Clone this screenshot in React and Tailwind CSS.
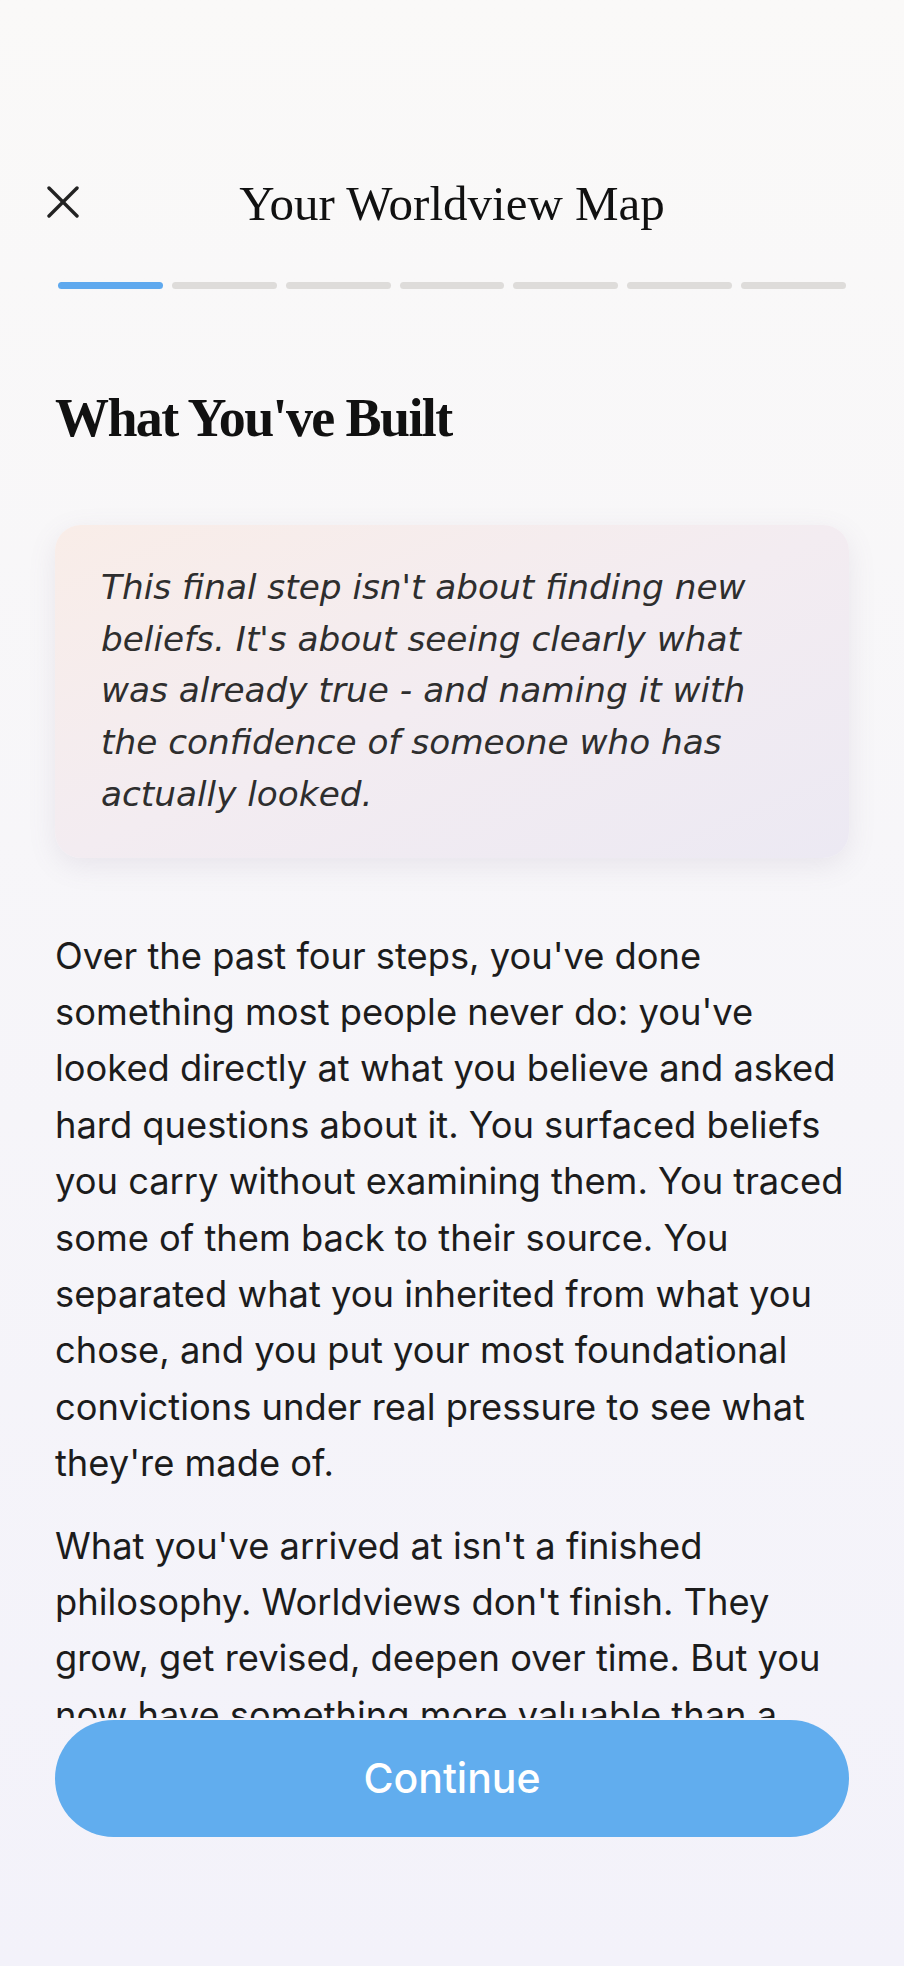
import { useState } from 'react'

const steps = [0, 1, 2, 3, 4, 5, 6]

const paragraphs = [
  "Over the past four steps, you've done something most people never do: you've looked directly at what you believe and asked hard questions about it. You surfaced beliefs you carry without examining them. You traced some of them back to their source. You separated what you inherited from what you chose, and you put your most foundational convictions under real pressure to see what they're made of.",
  "What you've arrived at isn't a finished philosophy. Worldviews don't finish. They grow, get revised, deepen over time. But you now have something more valuable than a finished answer: a map you drew yourself, with your own hands, from what you actually found.",
]

function CloseIcon() {
  return (
    <svg width="32" height="32" viewBox="0 0 32 32" fill="none" stroke="#222222" strokeWidth="3.4" strokeLinecap="round">
      <path d="M2 2 30 30" />
      <path d="M30 2 2 30" />
    </svg>
  )
}

export default function App() {
  const [current] = useState(0)

  return (
    <div
      className="flex h-[1966px] w-full flex-col overflow-hidden bg-gradient-to-b from-[#faf9f8] to-[#f3f2fa] text-[#1c1c1c]"
      style={{ fontFamily: 'Inter, "Noto Sans", sans-serif' }}
    >
      {/* header */}
      <div className="pt-[173px]">
        <div className="flex h-[60px] items-center px-[47px]">
          <button className="-mt-[3px] flex h-[32px] w-[32px] items-center justify-center">
            <CloseIcon />
          </button>
          <h1 className="flex-1 text-center font-['Liberation_Serif',serif] text-[49px] leading-none text-[#111111]">
            Your Worldview Map
          </h1>
          <div className="w-[32px]" />
        </div>
      </div>

      {/* progress */}
      <div className="mt-[49px] flex gap-[9px] px-[58px]">
        {steps.map((s) => (
          <div
            key={s}
            className={
              s <= current
                ? 'h-[7px] flex-1 rounded-full bg-[#5fa9ee]'
                : 'h-[7px] flex-1 rounded-full bg-[#dedcda]'
            }
          />
        ))}
      </div>

      {/* content */}
      <div className="flex-1 overflow-hidden px-[55px] pt-[102px]">
        <h2 className="font-['Liberation_Serif',serif] text-[54px] font-bold leading-none tracking-[-0.03em] text-[#111111]">
          What You've Built
        </h2>

        <div className="mt-[80px] rounded-[26px] bg-gradient-to-br from-[#f9ede8] via-[#f3ecf1] to-[#ece9f3] px-[46px] py-[37px] shadow-[0_8px_28px_rgba(120,110,140,0.12)]">
          <p className="font-['DejaVu_Sans',sans-serif] text-[34.3px] italic leading-[51.7px] text-[#2e2e2e]">
            This final step isn't about finding new beliefs. It's about seeing clearly what was already true - and naming it with the confidence of someone who has actually looked.
          </p>
        </div>

        <div className="mt-[70px] flex flex-col gap-[26px]">
          {paragraphs.map((p, i) => (
            <p key={i} className="text-[36.3px] leading-[56.4px]">
              {p}
            </p>
          ))}
        </div>
      </div>

      {/* footer */}
      <div className="px-[55px] pb-[129px] pt-[2px]">
        <button className="flex h-[117px] w-full items-center justify-center rounded-full bg-[#61adee] text-[41px] font-medium text-white">
          Continue
        </button>
      </div>
    </div>
  )
}
